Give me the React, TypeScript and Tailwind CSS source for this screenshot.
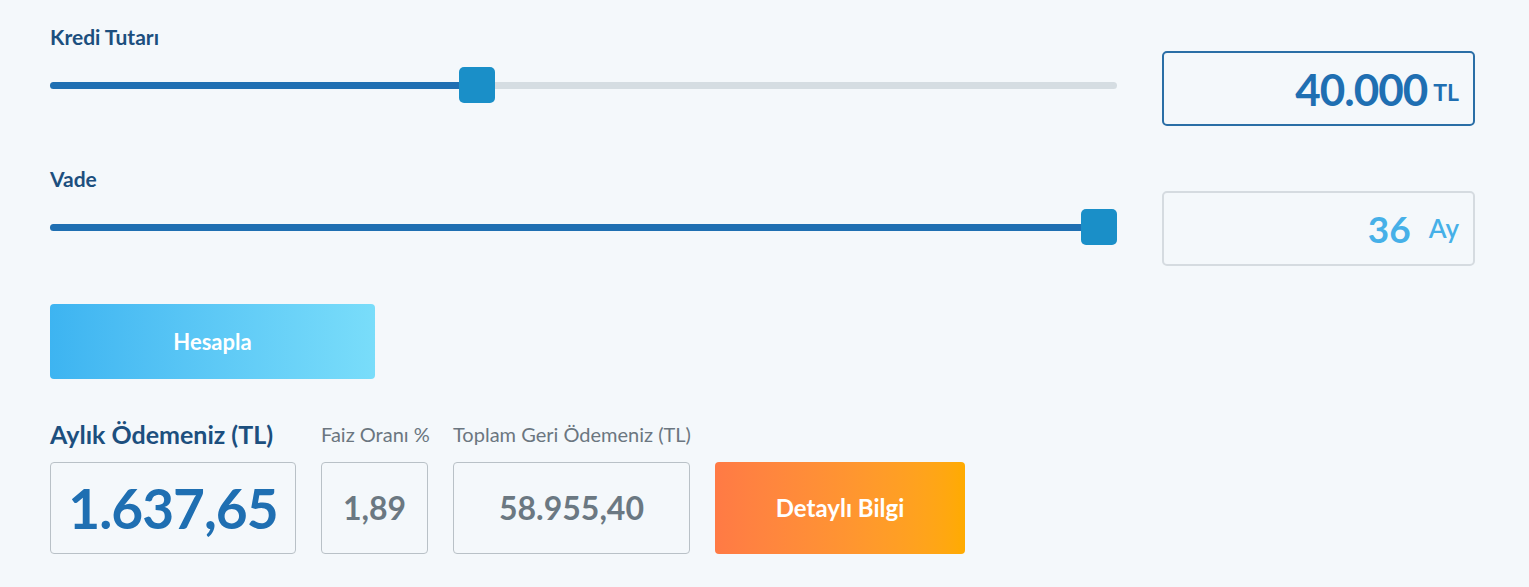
import { useState } from "react";

const FONT = "font-['Lato','Noto_Sans',sans-serif]";

function Slider({ pct }: { pct: number }) {
  return (
    <div className="relative h-9 w-[1067px] flex items-center">
      <div className="w-full h-[7px] rounded-full bg-[#d5dde2]">
        <div className="h-full rounded-full bg-[#1f6fb2]" style={{ width: `${pct}%` }} />
      </div>
      {/* thumb */}
      <div
        className="absolute top-0 w-9 h-9 rounded-[5px] bg-[#1a8fc8]"
        style={{ left: `calc(${pct}% - ${(pct / 100) * 36}px)` }}
      />
    </div>
  );
}

function ResultBox({ value, className }: { value: string; className: string }) {
  return (
    <div className={`h-[92px] rounded-[4px] border border-[#b9c1c7] flex items-center justify-center ${className}`}>
      {value}
    </div>
  );
}

export default function App() {
  const [amountPct] = useState(39.7);

  return (
    <div className={`w-[1529px] h-[587px] bg-[#f4f8fb] pl-[50px] pt-[25px] ${FONT}`}>
      {/* Kredi Tutarı */}
      <div className="flex items-end gap-[45px]">
        <div>
          <div className="text-[21px] font-bold text-[#1c4f7e] leading-6 mb-[18px]">Kredi Tutarı</div>
          <Slider pct={amountPct} />
          <div className="h-[23px]" />
        </div>
        <div className="w-[313px] h-[75px] rounded-[5px] border-2 border-[#2a6ea6] flex items-baseline justify-end pr-[14px] pt-[12px] gap-[6px] text-[#1f6fb2] font-bold">
          <span className="text-[44px] leading-[48px] tracking-[-1px]">40.000</span>
          <span className="text-[23px] relative -top-[5px]">TL</span>
        </div>
      </div>

      {/* Vade */}
      <div className="flex items-end gap-[45px] mt-[41px]">
        <div>
          <div className="text-[21px] font-bold text-[#1c4f7e] leading-6 mb-[18px]">Vade</div>
          <Slider pct={100} />
          <div className="h-[21px]" />
        </div>
        <div className="w-[313px] h-[75px] rounded-[5px] border-2 border-[#d5dbe0] flex items-center justify-end pr-[14px] gap-[18px] text-[#46b0e8]">
          <span className="text-[37px] font-bold">36</span>
          <span className="text-[26px] font-semibold">Ay</span>
        </div>
      </div>

      <button className="mt-[38px] w-[325px] h-[75px] rounded-[4px] bg-gradient-to-r from-[#3db4f1] to-[#79ddfa] text-white text-[22px] font-bold">
        Hesapla
      </button>

      {/* Results */}
      <div className="mt-[41px] flex items-end gap-[25px]">
        <div className="w-[246px]">
          <div className="text-[25px] font-bold text-[#1c4f7e] leading-7 mb-[14px] whitespace-nowrap">Aylık Ödemeniz (TL)</div>
          <ResultBox value="1.637,65" className="w-[246px] text-[55px] font-bold text-[#1f6fb2] tracking-[-1px]" />
        </div>
        <div className="w-[107px]">
          <div className="text-[20px] text-[#6b7680] leading-6 mb-[16px] whitespace-nowrap">Faiz Oranı %</div>
          <ResultBox value="1,89" className="w-[107px] text-[32px] font-bold text-[#6b7882]" />
        </div>
        <div className="w-[237px]">
          <div className="text-[20px] text-[#6b7680] leading-6 mb-[16px] whitespace-nowrap">Toplam Geri Ödemeniz (TL)</div>
          <ResultBox value="58.955,40" className="w-[237px] text-[32px] font-bold text-[#6b7882]" />
        </div>
        <button className="w-[250px] h-[92px] rounded-[4px] bg-gradient-to-r from-[#ff7a45] to-[#ffab00] text-white text-[24px] font-bold">
          Detaylı Bilgi
        </button>
      </div>
    </div>
  );
}
